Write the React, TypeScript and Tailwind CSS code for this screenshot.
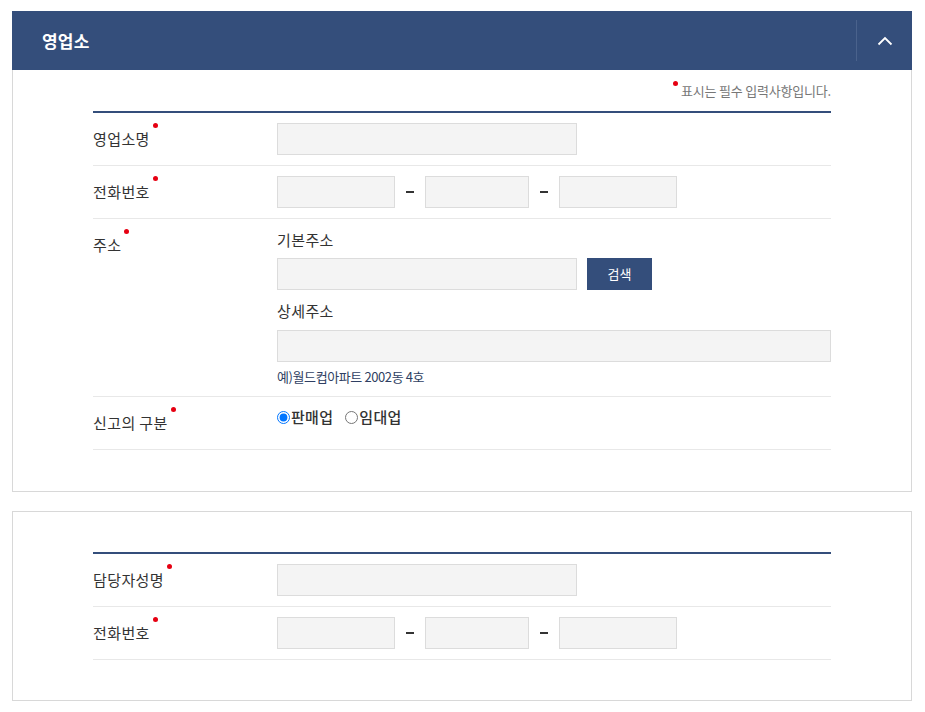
import React from "react";

const font = { fontFamily: '"Noto Sans CJK KR", "Noto Sans", sans-serif' };

function Req({ children }: { children: React.ReactNode }) {
  return (
    <span className="relative inline-block">
      {children}
      <span className="absolute -right-[8px] top-[0px] w-[5px] h-[5px] rounded-full bg-[#e60012]" />
    </span>
  );
}

function Input({ w }: { w: string }) {
  return <div className={`${w} h-[32px] bg-[#f4f4f4] border border-[#dcdcdc] shrink-0`} />;
}

function Dash() {
  return (
    <span className="w-[30px] h-[32px] flex items-center justify-center">
      <span className="w-[8px] h-[2px] bg-[#333]" />
    </span>
  );
}

function Phone() {
  return (
    <div className="flex items-center">
      <Input w="w-[118px]" />
      <Dash />
      <Input w="w-[104px]" />
      <Dash />
      <Input w="w-[118px]" />
    </div>
  );
}

function Row({ label, children, rightClass = "py-[10px]" }: { label: string; children: React.ReactNode; rightClass?: string }) {
  return (
    <div className="flex border-b border-[#e8e8e8]">
      <div className="w-[184px] shrink-0 py-[10px] text-[15px] leading-[32px] text-[#333] tracking-[0.4px]">
        <Req>{label}</Req>
      </div>
      <div className={`flex-1 ${rightClass}`}>{children}</div>
    </div>
  );
}

export default function App() {
  return (
    <div className="bg-white w-[925px] min-h-[712px] pt-[11px] pl-[12px]" style={font}>
      <div className="w-[900px]">
        <div className="h-[59px] bg-[#344e7b] flex items-center justify-between pl-[30px]">
          <span className="text-white text-[17px] font-bold tracking-[0.2px]">영업소</span>
          <div className="flex items-center h-full">
            <div className="w-px h-[41px] bg-[#4a628c]" />
            <div className="w-[55px] flex items-center justify-center">
              <svg width="16" height="10" viewBox="0 0 16 10" fill="none">
                <path d="M1.5 8.5 L8 2 L14.5 8.5" stroke="white" strokeWidth="1.8" />
              </svg>
            </div>
          </div>
        </div>
        <div className="border border-t-0 border-[#d8d8d8] px-[80px] pt-[12px] pb-[41px]">
          <div className="flex justify-end items-start text-[13px] leading-[18px] text-[#777] tracking-[-0.2px]">
            <span className="w-[5px] h-[5px] rounded-full bg-[#e60012] mr-[3px] mt-[-1px]" />
            표시는 필수 입력사항입니다.
          </div>
          <div className="mt-[11px] border-t-2 border-[#344e7b]">
            <Row label="영업소명">
              <Input w="w-[300px]" />
            </Row>
            <Row label="전화번호">
              <Phone />
            </Row>
            <Row label="주소" rightClass="pt-[12px] pb-[10px]">
              <div className="text-[15px] leading-[18px] text-[#333] tracking-[0.4px]">기본주소</div>
              <div className="flex items-center mt-[9px] gap-[10px]">
                <Input w="w-[300px]" />
                <button className="w-[65px] h-[32px] bg-[#344e7b] text-white text-[13px]">검색</button>
              </div>
              <div className="mt-[12px] text-[15px] leading-[18px] text-[#333] tracking-[0.4px]">상세주소</div>
              <div className="mt-[10px] h-[32px] bg-[#f4f4f4] border border-[#dcdcdc]" />
              <div className="mt-[6px] text-[13px] leading-[18px] text-[#2f3f63] tracking-[-0.4px]">예)월드컵아파트 2002동 4호</div>
            </Row>
            <Row label="신고의 구분" rightClass="pt-[11px] pb-[10px]">
              <div className="flex items-center text-[15px] leading-[18px] text-[#333] font-medium tracking-[0.3px]">
                <label className="flex items-center">
                  <input type="radio" name="kind" defaultChecked className="w-[13px] h-[13px] m-0 mr-[1px]" />
                  판매업
                </label>
                <label className="flex items-center ml-[12px]">
                  <input type="radio" name="kind" className="w-[13px] h-[13px] m-0 mr-[1px]" />
                  임대업
                </label>
              </div>
            </Row>
          </div>
        </div>
        <div className="mt-[19px] border border-[#d8d8d8] px-[80px] pt-[40px] pb-[40px]">
          <div className="border-t-2 border-[#344e7b]">
            <Row label="담당자성명">
              <Input w="w-[300px]" />
            </Row>
            <Row label="전화번호">
              <Phone />
            </Row>
          </div>
        </div>
      </div>
    </div>
  );
}
